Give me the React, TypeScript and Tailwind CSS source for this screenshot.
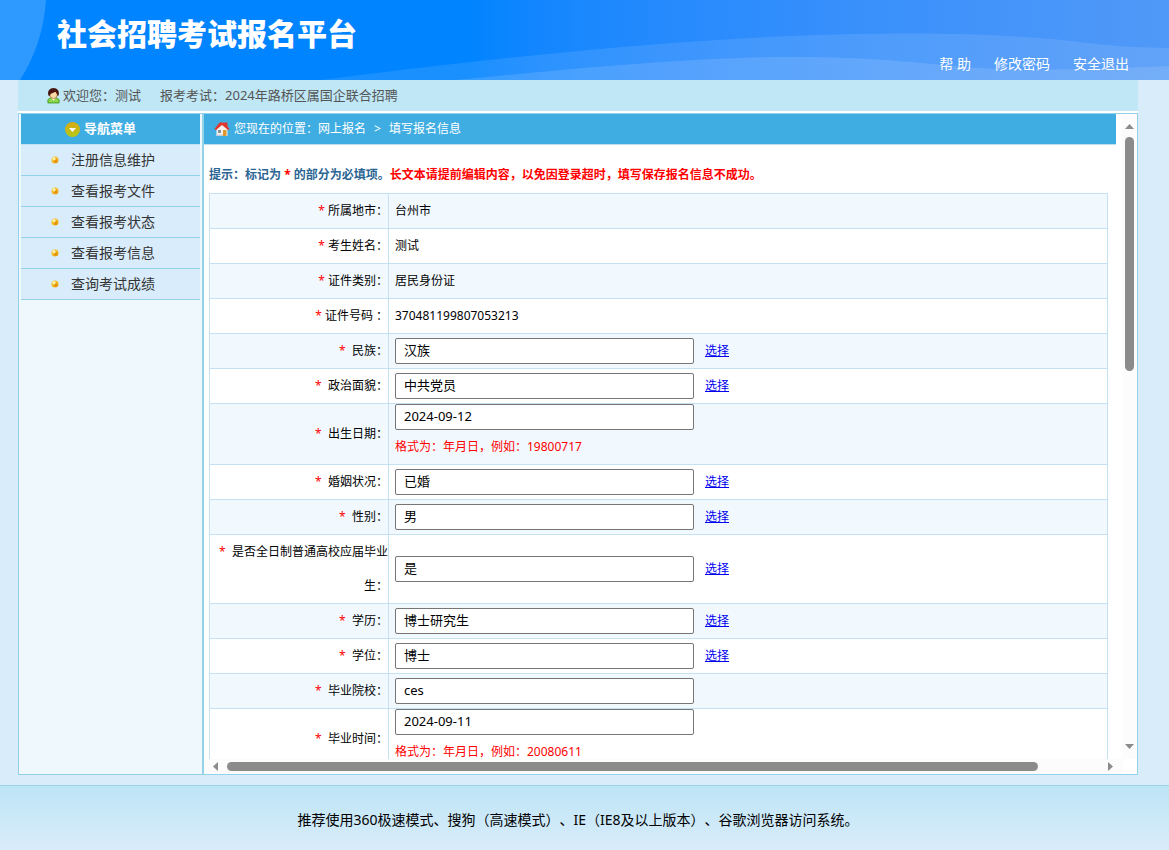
import { useState } from 'react';

type FieldKind = 'text' | 'input' | 'select' | 'date';

interface Field {
  id: string;
  label: string;
  value: string;
  kind: FieldKind;
  hint?: string;
}

const MENU_ITEMS = ['注册信息维护', '查看报考文件', '查看报考状态', '查看报考信息', '查询考试成绩'];

const FIELDS: Field[] = [
  { id: 'city', label: '所属地市：', value: '台州市', kind: 'text' },
  { id: 'name', label: '考生姓名：', value: '测试', kind: 'text' },
  { id: 'idType', label: '证件类别：', value: '居民身份证', kind: 'text' },
  { id: 'idNo', label: '证件号码 ：', value: '370481199807053213', kind: 'text' },
  { id: 'nation', label: '民族：', value: '汉族', kind: 'select' },
  { id: 'politics', label: '政治面貌：', value: '中共党员', kind: 'select' },
  { id: 'birthday', label: '出生日期：', value: '2024-09-12', kind: 'date', hint: '格式为：年月日，例如：19800717' },
  { id: 'marriage', label: '婚姻状况：', value: '已婚', kind: 'select' },
  { id: 'gender', label: '性别：', value: '男', kind: 'select' },
  { id: 'fresh', label: '是否全日制普通高校应届毕业生：', value: '是', kind: 'select' },
  { id: 'education', label: '学历：', value: '博士研究生', kind: 'select' },
  { id: 'degree', label: '学位：', value: '博士', kind: 'select' },
  { id: 'school', label: '毕业院校：', value: 'ces', kind: 'input' },
  { id: 'graduation', label: '毕业时间：', value: '2024-09-11', kind: 'date', hint: '格式为：年月日，例如：20080611' },
];

function UserIcon() {
  return (
    <svg width="13" height="17" viewBox="0 0 14 17" aria-hidden="true">
      <path d="M1 16.500V13l3-2h6l3 2v3.500z" fill="#8fd64a" stroke="#3f9a1c" />
      <path d="M4.500 11 7 14l2.500-3z" fill="#fff" />
      <circle cx="7" cy="7.500" r="4.200" fill="#fbd9a4" stroke="#a5612a" strokeWidth=".8" />
      <path d="M1.500 8.500C.2 3.500 3 .5 7 .5s6.800 3 5.500 8l-1.300.3C11 7 10 5.500 9 4.500 7 6 4 5.500 3 9z" fill="#4a1410" />
    </svg>
  );
}

function HouseIcon() {
  return (
    <svg width="16" height="16" viewBox="0 0 16 16" aria-hidden="true">
      <path d="M11 1.500h2.500v4H11z" fill="#d33a2c" />
      <path d="M2.500 7.500 8 3l5.500 4.500V15h-11z" fill="#f5f3ee" />
      <path d="M.5 8 5.500 1.500h5L15.500 8l-1.500 1-6-5-6 5z" fill="#e2352b" />
      <path d="M4 9h3v3H4z" fill="#8a8f9c" />
      <path d="M9 9h3.500v6H9z" fill="#e0962a" />
      <path d="M2.500 13.500H9V15H2.500z" fill="#c9ccd4" />
    </svg>
  );
}

function MenuIcon() {
  return (
    <svg width="15" height="15" viewBox="0 0 15 15" aria-hidden="true">
      <defs>
        <linearGradient id="menuDot" x1="0" y1="0" x2="0" y2="1">
          <stop offset="0" stopColor="#d9a914" />
          <stop offset="1" stopColor="#b5c918" />
        </linearGradient>
      </defs>
      <circle cx="7.500" cy="7.500" r="7.500" fill="url(#menuDot)" />
      <path d="M4 6h7L7.500 10z" fill="#fff" />
    </svg>
  );
}

function Bullet() {
  return (
    <svg width="8" height="8" viewBox="0 0 8 8" aria-hidden="true">
      <circle cx="4" cy="4" r="3.500" fill="#f5b820" />
      <circle cx="4.800" cy="5" r="2" fill="#e39408" />
      <circle cx="3" cy="2.800" r="1.700" fill="#fff3a0" />
    </svg>
  );
}

function HeaderWaves() {
  return (
    <svg
      className="absolute inset-0 h-full w-full"
      viewBox="0 0 1169 80"
      preserveAspectRatio="none"
      aria-hidden="true"
    >
      <path d="M0 0H46Q43 44 20 80H0z" fill="#fff" fillOpacity=".18" />
      <path d="M320 80C470 61 640 42 790 36S1030 36 1080 42 1140 47 1169 48V80z" fill="#fff" fillOpacity=".1" />
      <path d="M455 80C560 70 690 57 790 57S930 65 980 68 1110 69 1169 66V80z" fill="#fff" fillOpacity=".12" />
    </svg>
  );
}

function Header() {
  return (
    <header className="relative h-20 shrink-0 bg-linear-to-r from-[#0084ff] from-40% to-[#5099f8]">
      <HeaderWaves />
      <div className="relative flex h-full justify-between pr-10 pl-[57px]">
        <h1 className="pt-[14px] text-[30px] leading-10 font-black text-white">社会招聘考试报名平台</h1>
        <nav className="flex items-end gap-[23px] pb-1.5 text-sm text-white">
          <a href="#help">帮 助</a>
          <a href="#password">修改密码</a>
          <a href="#logout">安全退出</a>
        </nav>
      </div>
    </header>
  );
}

function Sidebar() {
  return (
    <aside className="w-[185px] shrink-0 border-r-2 border-[#93d2e9] bg-[#eff8fc] px-0.5">
      <h2 className="flex h-[31px] items-center justify-center gap-1 border-b border-[#bfe0f0] bg-[#3fade1] pr-5 text-[13px] font-bold text-white">
        <MenuIcon />
        导航菜单
      </h2>
      <ul>
        {MENU_ITEMS.map((item) => (
          <li key={item} className="border-b border-[#93d2e9] bg-[#d9ecfb]">
            <a href="#menu" className="flex h-[30px] items-center gap-3 pl-[30px] text-sm text-[#333]">
              <Bullet />
              {item}
            </a>
          </li>
        ))}
      </ul>
    </aside>
  );
}

function FieldRow({ field, value, onChange }: { field: Field; value: string; onChange: (v: string) => void }) {
  const isText = field.kind === 'text';

  return (
    <tr className="border border-[#c5e2f5] odd:bg-[#f1f9ff] even:bg-white">
      <th scope="row" className="border-r border-[#c5e2f5] p-0 text-right font-normal">
        <label htmlFor={isText ? undefined : field.id}>
          <span className="text-[#f00]">*</span>
          {isText ? ' ' : '\u00a0 '}
          {field.label}
        </label>
      </th>
      <td className="p-0 pl-1.5">
        {isText ? (
          value
        ) : (
          <div className="flex items-center gap-[11px]">
            <input
              id={field.id}
              type="text"
              value={value}
              onChange={(e) => onChange(e.target.value)}
              className="h-[26px] w-[299px] rounded-xs border border-[#767676] bg-white px-2 pb-0.5 text-[13px] text-black"
            />
            {field.kind === 'select' && (
              <a href={`#${field.id}`} className="leading-6 text-[#00e] underline">
                选择
              </a>
            )}
          </div>
        )}
        {field.hint && <p className="text-[#f00]">{field.hint}</p>}
      </td>
    </tr>
  );
}

function Arrow({ d, w, h }: { d: string; w: number; h: number }) {
  return (
    <svg width={w} height={h} viewBox={`0 0 ${w} ${h}`} className="shrink-0" aria-hidden="true">
      <path d={d} fill="#8b8b8b" />
    </svg>
  );
}

function VerticalScrollbar() {
  return (
    <div className="flex w-[15px] shrink-0 flex-col items-center gap-2 bg-[#fcfcfc] py-2.5">
      <Arrow w={9} h={5} d="M0 5 4.500 0 9 5z" />
      <div className="w-full flex-1">
        <div className="mx-auto h-[39%] w-[9px] rounded-full bg-[#8b8b8b]" />
      </div>
      <Arrow w={9} h={5} d="M0 0h9L4.500 5z" />
    </div>
  );
}

function HorizontalScrollbar() {
  return (
    <div className="mr-[15px] flex h-[15px] shrink-0 items-center gap-[9px] bg-[#fcfcfc] px-[9px]">
      <Arrow w={5} h={9} d="M5 0v9L0 4.500z" />
      <div className="flex-1">
        <div className="h-[9px] w-[93%] rounded-full bg-[#8b8b8b]" />
      </div>
      <Arrow w={5} h={9} d="M0 0v9l5-4.500z" />
    </div>
  );
}

function ApplyForm() {
  const [values, setValues] = useState<Record<string, string>>(() =>
    Object.fromEntries(FIELDS.map((f) => [f.id, f.value]))
  );

  return (
    <div className="min-h-0 flex-1 overflow-hidden">
      <div className="mr-1.5 flex h-[31px] items-center gap-1 border-b border-[#bfe0f0] bg-[#3fade1] pl-2.5 text-xs text-white">
        <HouseIcon />
        <p>
          您现在的位置：网上报名<span className="mx-2">&gt;</span>填写报名信息
        </p>
      </div>

      <form className="mr-3.5 ml-[5px]">
        <p className="pt-[19px] pb-2 text-xs leading-[21px] font-bold text-[#2b6593]">
          提示：标记为 <span className="text-[#f00]">*</span> 的部分为必填项。
          <span className="text-[#f00]">长文本请提前编辑内容，以免因登录超时，填写保存报名信息不成功。</span>
        </p>
        <table className="w-full table-fixed border-collapse text-xs leading-[34px] text-black">
          <colgroup>
            <col className="w-[179px]" />
            <col />
          </colgroup>
          <tbody>
            {FIELDS.map((field) => (
              <FieldRow
                key={field.id}
                field={field}
                value={values[field.id]}
                onChange={(v) => setValues((prev) => ({ ...prev, [field.id]: v }))}
              />
            ))}
          </tbody>
        </table>
      </form>
    </div>
  );
}

export default function App() {
  return (
    <div className="flex h-screen min-h-[480px] flex-col bg-[#d9ecfa] font-['Noto_Sans','Noto_Sans_CJK_SC',sans-serif] [text-spacing-trim:space-all]">
      <Header />

      <div className="mr-[31px] ml-[18px] flex min-h-0 flex-1 flex-col">
        <div className="flex h-[31px] shrink-0 items-center bg-[#bfe7f6] pl-[29px] text-[13px] text-[#555]">
          <UserIcon />
          <span className="ml-[3px]">欢迎您：测试</span>
          <span className="ml-[19px]">报考考试：2024年路桥区属国企联合招聘</span>
        </div>

        <main className="flex min-h-0 flex-1 border-t-2 border-white">
          <div className="flex min-w-0 flex-1 border border-[#93d2e9] bg-white">
            <Sidebar />
            <section className="flex min-w-0 flex-1 flex-col">
              <div className="flex min-h-0 flex-1">
                <div className="flex min-w-0 flex-1 flex-col">
                  <ApplyForm />
                </div>
                <VerticalScrollbar />
              </div>
              <HorizontalScrollbar />
            </section>
          </div>
        </main>
      </div>

      <footer className="mt-2.5 shrink-0 border-t border-[#9cd3ec] bg-linear-to-b from-[#bde5f6] to-[#d9ecfa]">
        <p className="mr-[31px] ml-[18px] h-16 pt-6 text-center text-sm text-black">
          推荐使用360极速模式、搜狗（高速模式）、IE（IE8及以上版本）、谷歌浏览器访问系统。
        </p>
      </footer>
    </div>
  );
}
